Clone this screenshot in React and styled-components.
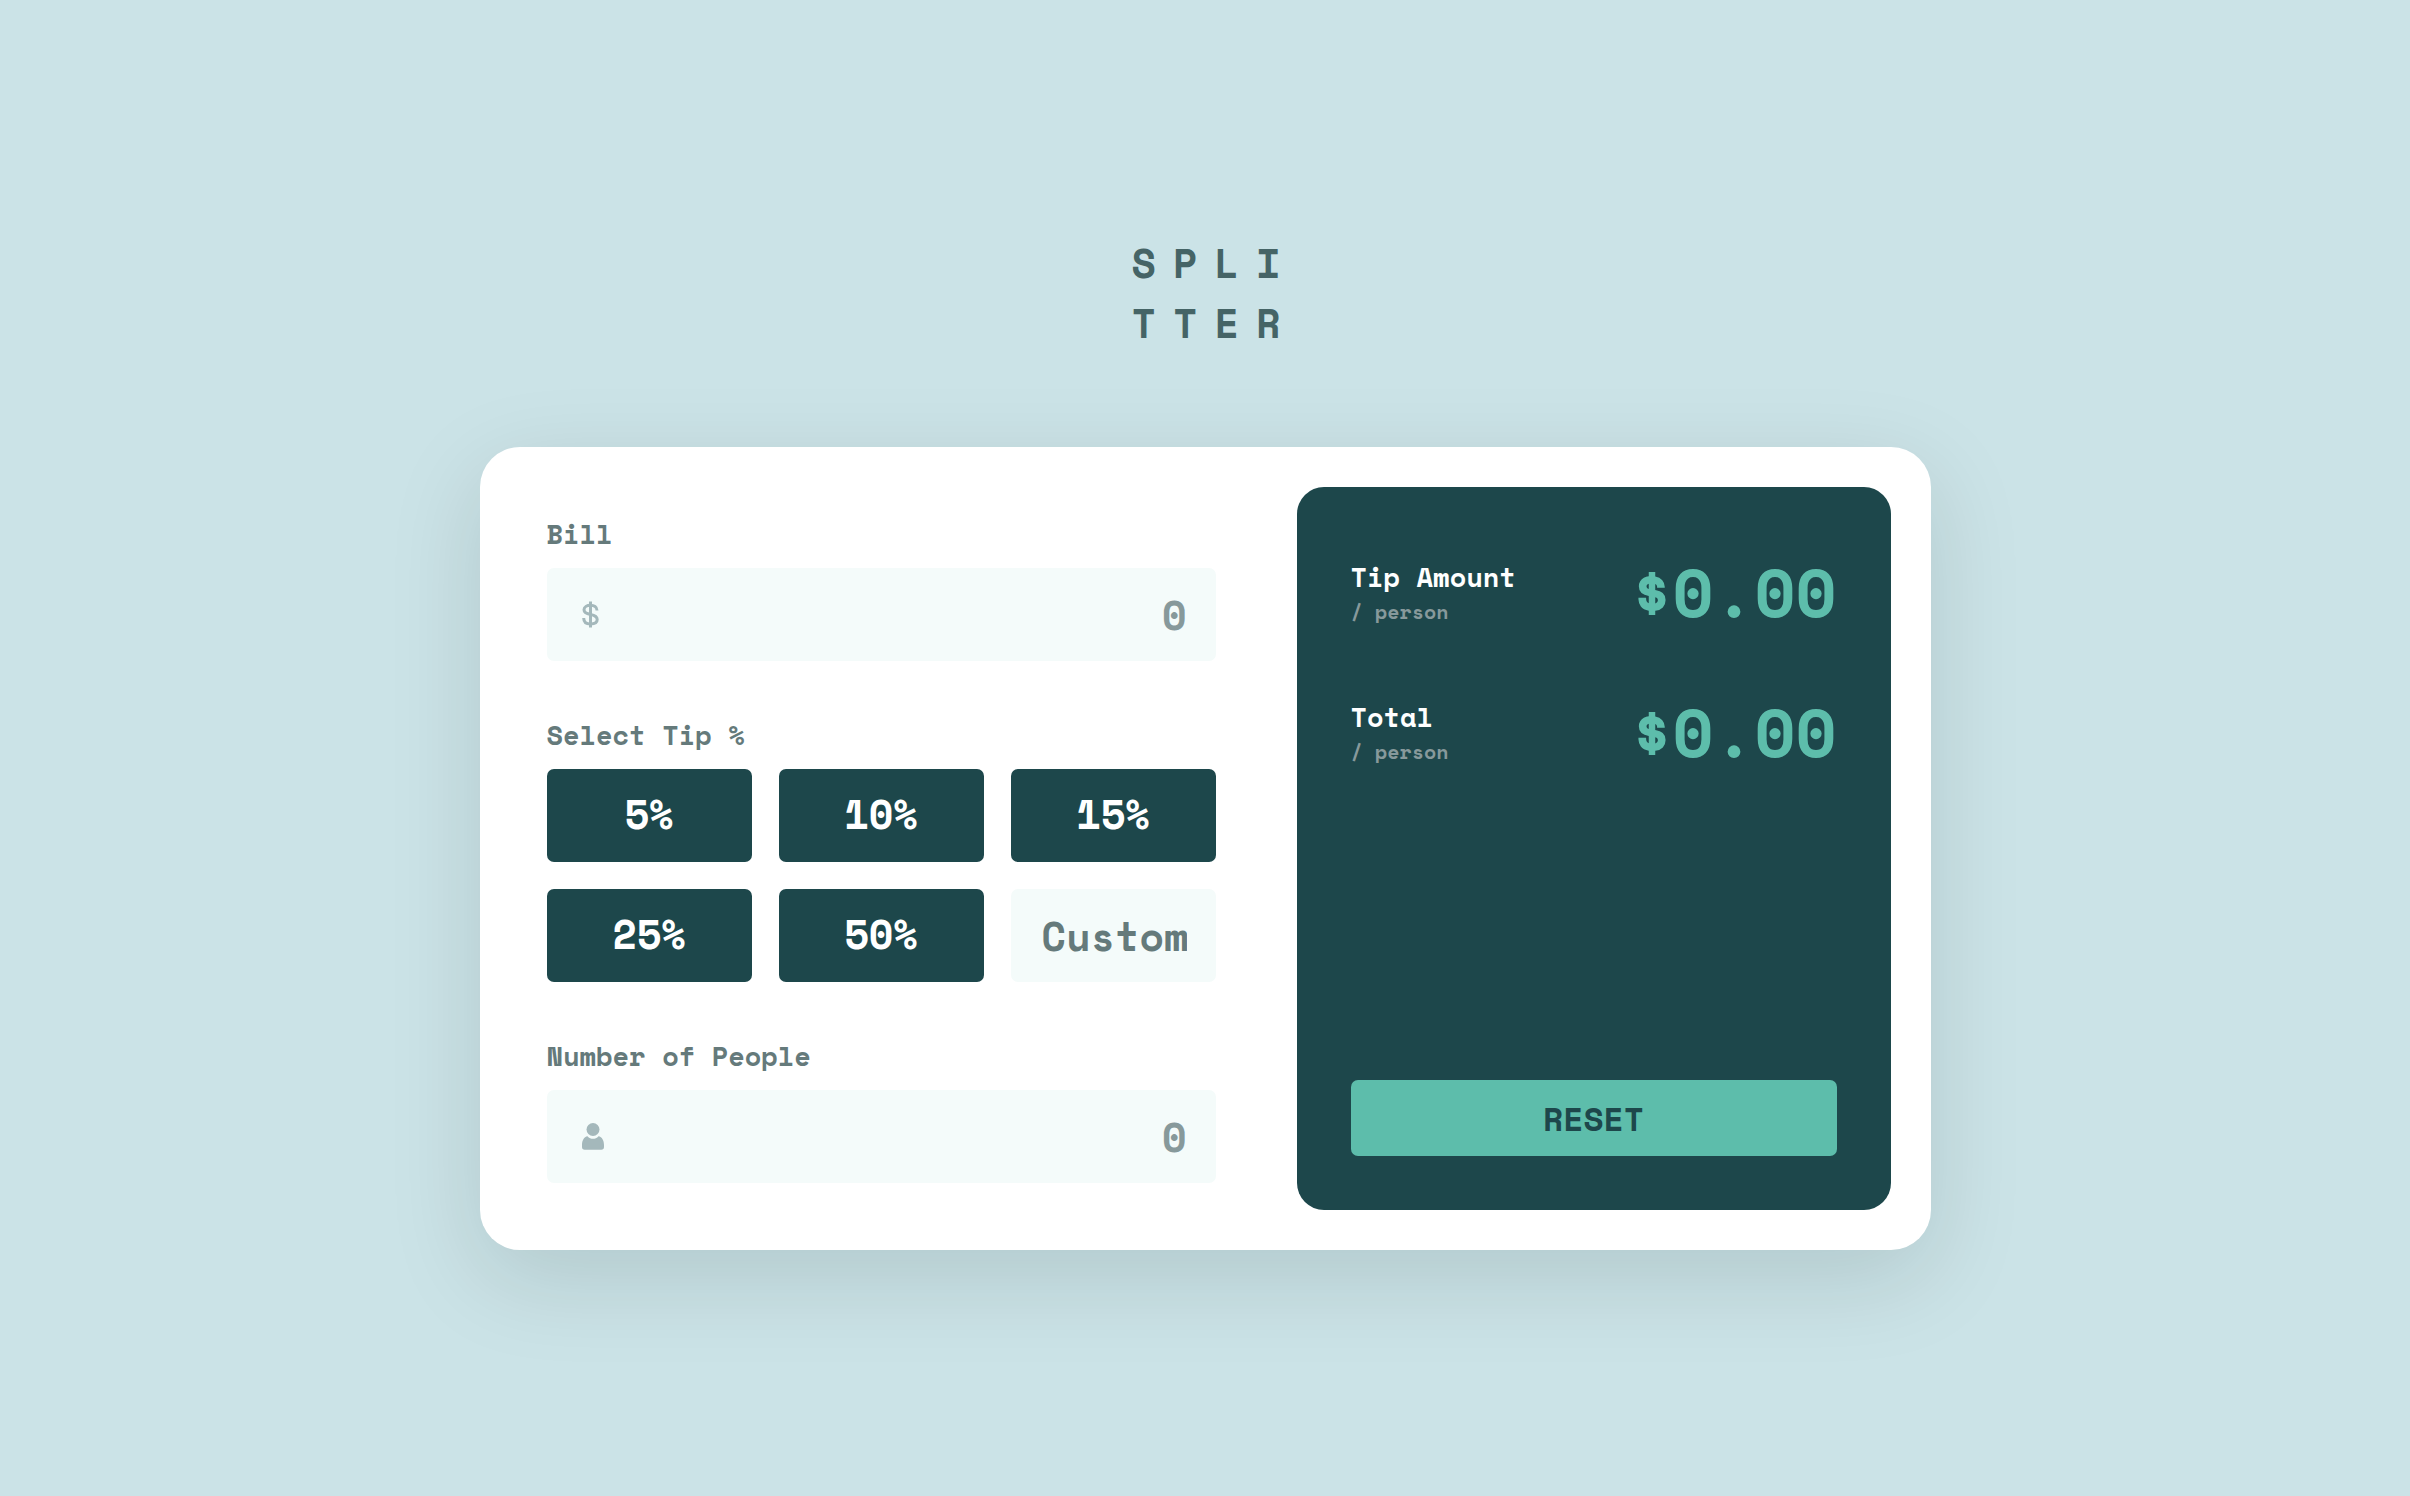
import React, { useState } from "react";
import styled, { createGlobalStyle, css } from "styled-components";

const colors = {
  page: "#cbe3e7",
  card: "#ffffff",
  dark: "#1d474b",
  mint: "#5dbdab",
  field: "#f4fbfa",
  label: "#657a7b",
  muted: "#87999b",
  icon: "#a4b8bb",
  logo: "#456466",
};

const GlobalStyle = createGlobalStyle`
  * { box-sizing: border-box; }
  body {
    margin: 0;
    background: ${colors.page};
    font-family: "Space Mono", "DejaVu Sans Mono", monospace;
    font-weight: 700;
  }
  button, input { font: inherit; }
`;

const Page = styled.main`
  min-height: 100vh;
  padding: 40px 40px 53px;
  display: flex;
  flex-direction: column;
  align-items: center;
  justify-content: center;
  gap: 94px;
`;

const Logo = styled.h1`
  margin: 0;
  padding-left: 19px;
  font-size: 40px;
  line-height: 60px;
  letter-spacing: 17px;
  color: ${colors.logo};
`;

const Card = styled.section`
  width: 100%;
  max-width: 1451px;
  padding: 40px;
  display: grid;
  grid-template-columns: 723fr 594fr;
  gap: 54px;
  background: ${colors.card};
  border-radius: 40px;
  box-shadow: 0 27px 94px rgba(0, 20, 20, 0.13);
`;

const Form = styled.form`
  padding: 27px;
  display: flex;
  flex-direction: column;
  gap: 54px;
`;

const Group = styled.div`
  min-width: 0;
  margin: 0;
  display: flex;
  flex-direction: column;
  gap: 14px;
`;

const labelText = css`
  font-size: 27px;
  line-height: 40px;
  color: ${colors.label};
`;

const Label = styled.label`
  ${labelText}
`;

const Caption = styled.span`
  ${labelText}
`;

const Field = styled.div`
  height: 93px;
  padding: 0 29px 0 35px;
  display: flex;
  align-items: center;
  gap: 27px;
  background: ${colors.field};
  border-radius: 7px;
`;

const inputText = css`
  min-width: 0;
  border: 0;
  outline: 0;
  font-size: 40px;
  text-align: right;
  color: ${colors.dark};
`;

const FieldInput = styled.input`
  ${inputText}
  flex: 1;
  height: 100%;
  padding: 0;
  background: transparent;
  &::placeholder {
    color: ${colors.muted};
    opacity: 1;
  }
`;

const Tips = styled.div`
  display: grid;
  grid-template-columns: repeat(3, 1fr);
  gap: 27px;
`;

const TipButton = styled.button`
  height: 93px;
  padding: 0 0 5px;
  border: 0;
  border-radius: 7px;
  font-size: 40px;
  cursor: pointer;
  color: ${(p) => (p.$active ? colors.dark : colors.card)};
  background: ${(p) => (p.$active ? colors.mint : colors.dark)};
`;

const CustomInput = styled.input`
  ${inputText}
  width: 100%;
  height: 93px;
  padding: 0 29px 0 31px;
  border-radius: 7px;
  background: ${colors.field};
  &::placeholder {
    color: ${colors.label};
    opacity: 1;
  }
`;

const Panel = styled.div`
  padding: 54px;
  display: flex;
  flex-direction: column;
  gap: 38px;
  background: ${colors.dark};
  border-radius: 27px;
`;

const Result = styled.div`
  height: 102px;
  display: flex;
  align-items: center;
  justify-content: space-between;
`;

const ResultText = styled.div`
  display: flex;
  flex-direction: column;
`;

const ResultName = styled.div`
  font-size: 27px;
  line-height: 40px;
  color: ${colors.card};
`;

const PerPerson = styled.div`
  font-size: 20px;
  line-height: 30px;
  color: ${colors.muted};
`;

const Amount = styled.output`
  font-size: 67px;
  line-height: 100px;
  color: ${colors.mint};
`;

const Reset = styled.button`
  height: 76px;
  margin-top: auto;
  padding: 0;
  border: 0;
  border-radius: 7px;
  font-size: 33px;
  cursor: pointer;
  color: ${colors.dark};
  background: ${colors.mint};
`;

const DollarIcon = () => (
  <svg width="17" height="27" viewBox="0 0 17 27" fill="none" stroke={colors.icon} strokeWidth="3" aria-hidden="true">
    <path d="M15 9.500C15 6 12 4.300 8.500 4.300S2 5.800 2 8.800C2 11.800 4.500 12.700 8.500 13.400S15.200 15.300 15.200 18.600S12.200 23 8.500 23S1.700 21.200 1.700 17" />
    <path d="M8.500 0.500V26.500" strokeWidth="3" />
  </svg>
);

const PersonIcon = () => (
  <svg width="22" height="27" viewBox="0 0 22 27" fill={colors.icon} aria-hidden="true">
    <circle cx="11" cy="6.500" r="6.500" />
    <path d="M5.500 13.200C7 15 9 15.800 11 15.800S15 15 16.500 13.200C20 13.800 22 17.500 22 22V24C22 25.800 21 26.700 19.300 26.700H2.700C1 26.700 0 25.800 0 24V22C0 17.500 2 13.800 5.500 13.200Z" />
  </svg>
);

const TIPS = [5, 10, 15, 25, 50];

const money = (n) => `$${n.toFixed(2)}`;

function ResultRow({ name, value }) {
  return (
    <Result>
      <ResultText>
        <ResultName>{name}</ResultName>
        <PerPerson>/ person</PerPerson>
      </ResultText>
      <Amount aria-label={name}>{money(value)}</Amount>
    </Result>
  );
}

export default function App() {
  const [bill, setBill] = useState("");
  const [tip, setTip] = useState(null);
  const [custom, setCustom] = useState("");
  const [people, setPeople] = useState("");

  const count = Number(people) || 0;
  const total = Number(bill) || 0;
  const percent = custom !== "" ? Number(custom) || 0 : tip || 0;
  const tipEach = count > 0 ? (total * percent) / 100 / count : 0;
  const totalEach = count > 0 ? total / count + tipEach : 0;

  const reset = () => {
    setBill("");
    setTip(null);
    setCustom("");
    setPeople("");
  };

  return (
    <>
      <GlobalStyle />
      <Page>
        <Logo>
          SPLI
          <br />
          TTER
        </Logo>
        <Card>
          <Form onSubmit={(e) => e.preventDefault()}>
            <Group>
              <Label htmlFor="bill">Bill</Label>
              <Field>
                <DollarIcon />
                <FieldInput id="bill" inputMode="decimal" placeholder="0" value={bill} onChange={(e) => setBill(e.target.value)} />
              </Field>
            </Group>
            <Group role="group" aria-labelledby="tip-caption">
              <Caption id="tip-caption">Select Tip %</Caption>
              <Tips>
                {TIPS.map((t) => (
                  <TipButton
                    key={t}
                    type="button"
                    $active={tip === t}
                    onClick={() => {
                      setTip(t);
                      setCustom("");
                    }}
                  >
                    {t}%
                  </TipButton>
                ))}
                <CustomInput
                  aria-label="Custom"
                  inputMode="decimal"
                  placeholder="Custom"
                  value={custom}
                  onChange={(e) => setCustom(e.target.value)}
                />
              </Tips>
            </Group>
            <Group>
              <Label htmlFor="people">Number of People</Label>
              <Field>
                <PersonIcon />
                <FieldInput id="people" inputMode="numeric" placeholder="0" value={people} onChange={(e) => setPeople(e.target.value)} />
              </Field>
            </Group>
          </Form>
          <Panel>
            <ResultRow name="Tip Amount" value={tipEach} />
            <ResultRow name="Total" value={totalEach} />
            <Reset type="button" onClick={reset}>RESET</Reset>
          </Panel>
        </Card>
      </Page>
    </>
  );
}
